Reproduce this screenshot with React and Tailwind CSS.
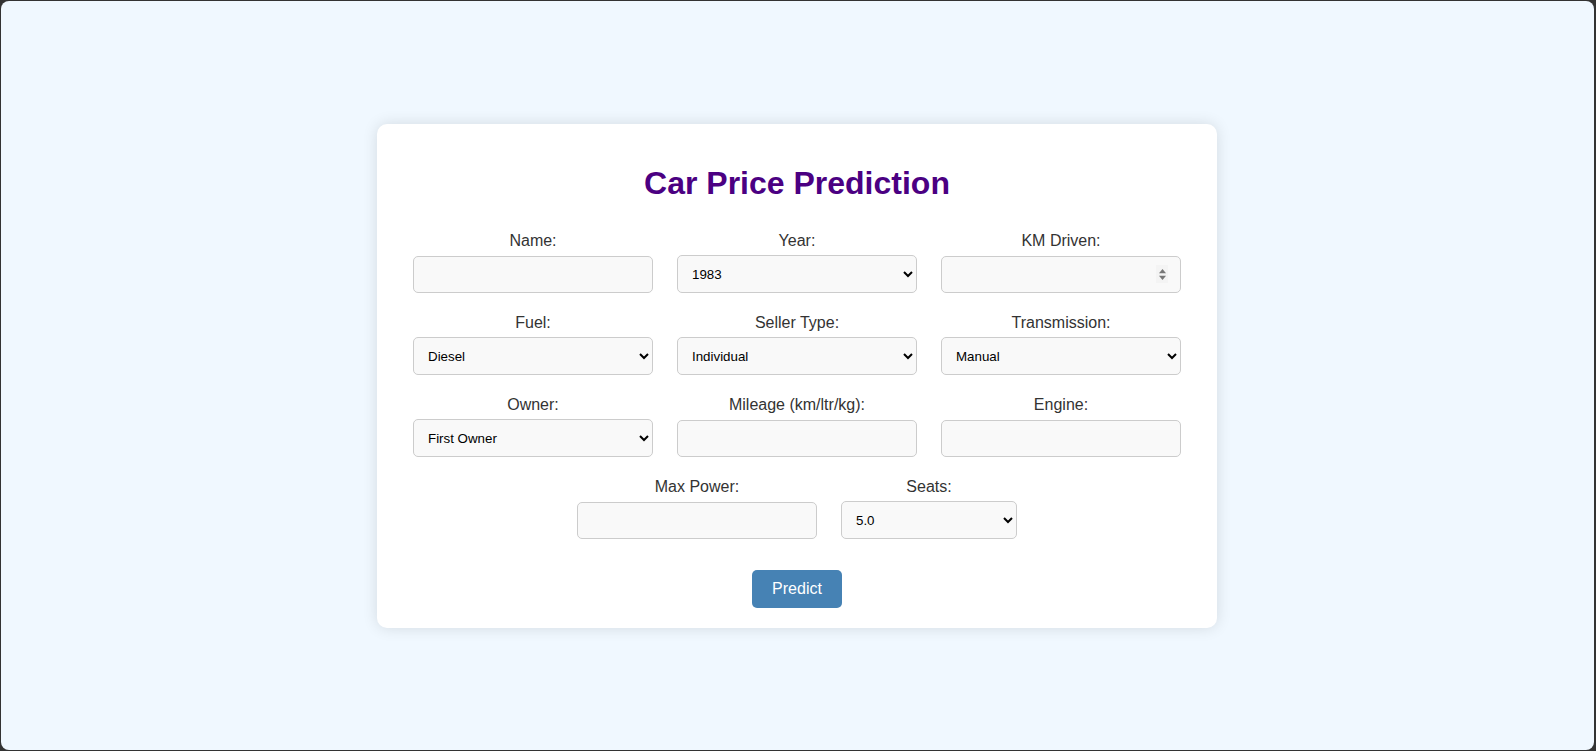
import { useState } from "react";

const font = { fontFamily: '"Liberation Sans", Arial, sans-serif' };

function Label({ children }) {
  return (
    <label className="block text-center text-[16px] leading-[18px] text-[#333] mb-[5px]">
      {children}
    </label>
  );
}

function TextField({ label, spinner }) {
  return (
    <div>
      <Label>{label}</Label>
      <div className="relative h-[38px] flex items-center">
        <input
          type="text"
          className="w-full h-[37px] px-[10px] bg-[#f9f9f9] border border-[#ccc] rounded-[5px] text-[13.33px] text-black outline-none"
        />
        {spinner && (
          <div className="absolute right-[13px] top-[10px] w-[12px] h-[18px] bg-[#f4f4f4] flex items-center justify-center">
            <svg width="9" height="13" viewBox="0 0 9 13">
              <path d="M4.5 1 L8 5.2 L1 5.2 Z" fill="#777" />
              <path d="M1 7.8 L8 7.8 L4.5 12 Z" fill="#777" />
            </svg>
          </div>
        )}
      </div>
    </div>
  );
}

function SelectField({ label, options, value, onChange }) {
  return (
    <div>
      <Label>{label}</Label>
      <div className="h-[38px] flex items-center">
        <select
          value={value}
          onChange={(e) => onChange(e.target.value)}
          className="w-full h-[38px] pl-[10px] pr-[2px] bg-[#f9f9f9] border border-[#ccc] rounded-[5px] text-[13.33px] text-black outline-none"
        >
          {options.map((o) => (
            <option key={o} value={o}>
              {o}
            </option>
          ))}
        </select>
      </div>
    </div>
  );
}

const years = Array.from({ length: 38 }, (_, i) => String(1983 + i));

export default function App() {
  const [year, setYear] = useState("1983");
  const [fuel, setFuel] = useState("Diesel");
  const [seller, setSeller] = useState("Individual");
  const [trans, setTrans] = useState("Manual");
  const [owner, setOwner] = useState("First Owner");
  const [seats, setSeats] = useState("5.0");

  return (
    <div className="h-[751px] bg-[#333] pt-[1px] pl-[1px] pr-[2px] pb-[1px]" style={font}>
      <div className="h-full rounded-[8px] bg-[#f0f8ff] flex items-center justify-center">
        <div className="w-[840px] bg-white rounded-[10px] shadow-[0_0_15px_rgba(0,0,0,0.12)] pt-[41px] pb-[20px] px-[36px] ml-[-1px] mt-[1px]">
          <h1 className="text-center text-[32px] leading-[37px] font-bold text-[#4b0082] mb-[30px]">
            Car Price Prediction
          </h1>

          <div className="grid grid-cols-3 gap-x-[24px] gap-y-[21px]">
            <TextField label="Name:" />
            <SelectField label="Year:" options={years} value={year} onChange={setYear} />
            <TextField label="KM Driven:" spinner />

            <SelectField
              label="Fuel:"
              options={["Diesel", "Petrol", "LPG", "CNG"]}
              value={fuel}
              onChange={setFuel}
            />
            <SelectField
              label="Seller Type:"
              options={["Individual", "Dealer", "Trustmark Dealer"]}
              value={seller}
              onChange={setSeller}
            />
            <SelectField
              label="Transmission:"
              options={["Manual", "Automatic"]}
              value={trans}
              onChange={setTrans}
            />

            <SelectField
              label="Owner:"
              options={["First Owner", "Second Owner", "Third Owner", "Fourth & Above Owner", "Test Drive Car"]}
              value={owner}
              onChange={setOwner}
            />
            <TextField label="Mileage (km/ltr/kg):" />
            <TextField label="Engine:" />
          </div>

          {/* last row, centred */}
          <div className="flex justify-center gap-x-[24px] mt-[21px]">
            <div className="w-[240px]">
              <TextField label="Max Power:" />
            </div>
            <div className="w-[176px]">
              <SelectField
                label="Seats:"
                options={["2.0", "4.0", "5.0", "6.0", "7.0", "8.0", "9.0", "10.0", "14.0"]}
                value={seats}
                onChange={setSeats}
              />
            </div>
          </div>

          <div className="flex justify-center mt-[31px]">
            <button className="w-[90px] h-[38px] bg-[#4682b4] text-white text-[16px] rounded-[5px]">
              Predict
            </button>
          </div>
        </div>
      </div>
    </div>
  );
}
